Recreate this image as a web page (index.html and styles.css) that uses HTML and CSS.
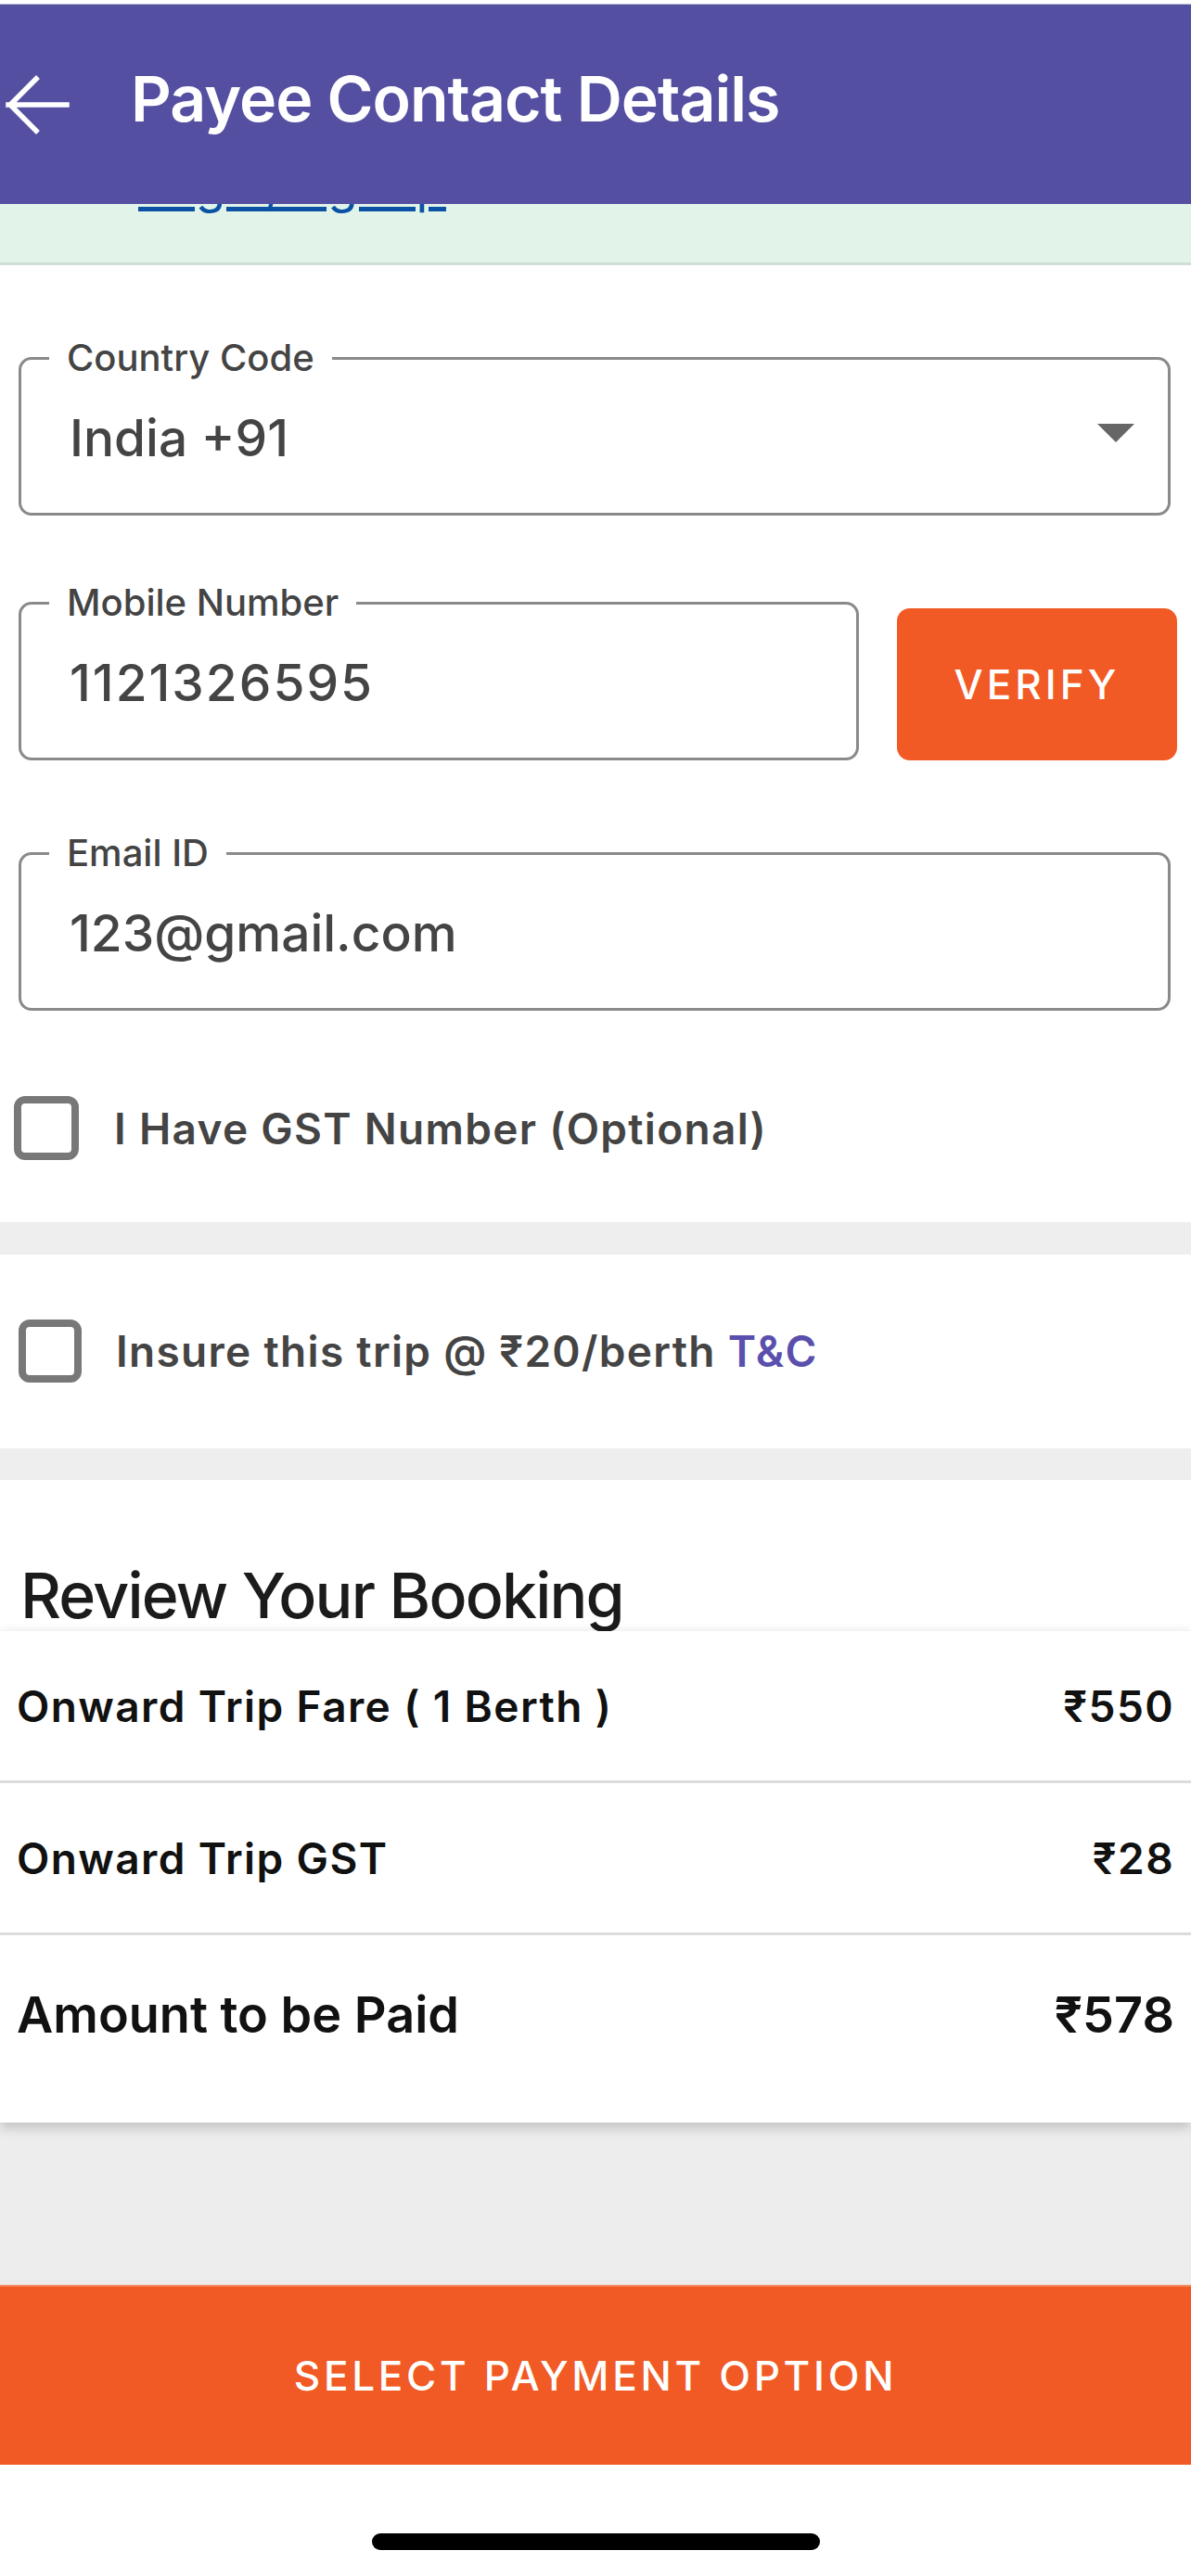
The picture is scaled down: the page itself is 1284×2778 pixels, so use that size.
FILE: index.html
```html
<!DOCTYPE html>
<html lang="en">
<head>
<meta charset="utf-8">
<title>Payee Contact Details</title>
<link rel="stylesheet" href="styles.css">
</head>
<body>
<div class="screen">
  <header class="appbar">
    <svg class="back" width="70" height="64" viewBox="0 0 70 64" aria-hidden="true">
      <path d="M3 32 H66 M33 4 L5 32 L33 60" fill="none" stroke="#ffffff" stroke-width="5.5" stroke-linecap="square" stroke-linejoin="miter"/>
    </svg>
    <h1 class="appbar-title">Payee Contact Details</h1>
  </header>

  <div class="notice">
    <a class="notice-link" href="#">Login/Signup</a>
  </div>

  <section class="form">
    <fieldset class="field field-wide">
      <legend>Country Code</legend>
      <div class="field-value">
        <span>India +91</span>
        <span class="caret"></span>
      </div>
    </fieldset>

    <div class="mobile-row">
      <fieldset class="field field-mobile">
        <legend>Mobile Number</legend>
        <div class="field-value"><span class="digits">1121326595</span></div>
      </fieldset>
      <button class="verify" type="button">VERIFY</button>
    </div>

    <fieldset class="field field-wide field-email">
      <legend>Email ID</legend>
      <div class="field-value"><span>123@gmail.com</span></div>
    </fieldset>

    <div class="check-row check-gst">
      <span class="checkbox"></span>
      <span class="check-label">I Have GST Number (Optional)</span>
    </div>
  </section>

  <div class="divider"></div>

  <section class="insure">
    <div class="check-row check-insure">
      <span class="checkbox"></span>
      <span class="check-label">Insure this trip @ ₹20/berth <a class="tnc" href="#">T&amp;C</a></span>
    </div>
  </section>

  <div class="divider divider-b"></div>

  <section class="review-head">
    <h2>Review Your Booking</h2>
  </section>

  <div class="fare-card">
    <div class="fare-row">
      <span>Onward Trip Fare ( 1 Berth )</span>
      <span>₹550</span>
    </div>
    <div class="fare-row">
      <span>Onward Trip GST</span>
      <span>₹28</span>
    </div>
    <div class="fare-row fare-total">
      <span>Amount to be Paid</span>
      <span>₹578</span>
    </div>
  </div>

  <div class="gray-space"></div>

  <button class="pay" type="button">SELECT PAYMENT OPTION</button>

  <div class="home-area">
    <span class="home-indicator"></span>
  </div>
</div>
</body>
</html>
```

FILE: styles.css
```css
* {
  box-sizing: border-box;
}

html, body {
  margin: 0;
  padding: 0;
  background: #ffffff;
}

body {
  font-family: "Inter", "Noto Sans", "DejaVu Sans", sans-serif;
  color: #444444;
}

.screen {
  width: 1284px;
  height: 2778px;
  display: flex;
  flex-direction: column;
  padding-top: 4px;
  overflow: hidden;
}

/* App bar */
.appbar {
  height: 216px;
  flex: 0 0 auto;
  background: #554fa1;
  border-top: 1px solid #b9b6d3;
  display: flex;
  align-items: center;
  padding-left: 6px;
}

.back {
  flex: 0 0 auto;
  display: block;
}

.appbar-title {
  margin: 0 0 14px 65px;
  font-size: 68px;
  font-weight: 600;
  color: #ffffff;
  letter-spacing: -1px;
  line-height: 1;
}

/* Notice strip (scrolled under the app bar) */
.notice {
  height: 66px;
  flex: 0 0 auto;
  background: #e2f4e9;
  border-bottom: 3px solid #cfdfd5;
  overflow: hidden;
  padding-left: 149px;
}

.notice-link {
  display: block;
  margin-top: -51px;
  font-size: 53px;
  line-height: 62px;
  color: #0b52a5;
  text-decoration: underline;
  text-decoration-thickness: 5px;
  text-underline-offset: 4px;
}

/* Form */
.form {
  flex: 0 0 auto;
  padding: 76px 0 67px 0;
  display: flex;
  flex-direction: column;
}

.field {
  margin: 0;
  border: 3px solid #8a8a8a;
  border-radius: 14px;
  padding: 0 36px 0 30px;
  min-width: 0;
}

.field-wide {
  margin: 0 22px 0 20px;
}

.field legend {
  padding: 0 19px;
  font-size: 40px;
  line-height: 48px;
  font-weight: 500;
  color: #444444;
}

.field-value {
  height: 143px;
  padding: 0 0 19px 22px;
  display: flex;
  align-items: center;
  justify-content: space-between;
  font-size: 55px;
  font-weight: 500;
  color: #444444;
  line-height: 1;
}

.digits {
  letter-spacing: 2px;
}

.caret {
  width: 0;
  height: 0;
  border-left: 20.5px solid transparent;
  border-right: 20.5px solid transparent;
  border-top: 20px solid #666666;
  margin-bottom: 10px;
}

.mobile-row {
  margin: 70px 15px 0 20px;
  display: flex;
  align-items: flex-end;
  gap: 41px;
}

.field-mobile {
  flex: 1 1 auto;
}

.verify {
  flex: 0 0 302px;
  height: 164px;
  margin-bottom: 0;
  border: none;
  border-radius: 14px;
  background: #f15a24;
  color: #ffffff;
  font-family: inherit;
  font-size: 44px;
  font-weight: 500;
  letter-spacing: 4px;
  padding: 0;
}

.field-email {
  margin-top: 76px;
}

.check-row {
  display: flex;
  align-items: center;
}

.check-gst {
  margin-top: 92px;
  padding-left: 15px;
  gap: 38px;
}

.checkbox {
  flex: 0 0 auto;
  width: 70px;
  height: 69px;
  border: 8px solid #787878;
  border-radius: 12px;
  background: #ffffff;
}

.check-label {
  font-size: 46px;
  font-weight: 600;
  color: #444444;
  line-height: 1;
  letter-spacing: 1.3px;
}

.divider {
  flex: 0 0 auto;
  height: 35px;
  background: #eeeeee;
}

.divider-b {
  height: 34px;
}

.insure {
  flex: 0 0 auto;
  padding: 70px 0 71px 0;
}

.check-insure {
  padding-left: 20px;
  gap: 37px;
}

.check-insure .checkbox {
  width: 68px;
  height: 68px;
}

.tnc {
  color: #5a4fad;
  text-decoration: none;
  font-weight: 600;
}

/* Review */
.review-head {
  flex: 0 0 auto;
  height: 163px;
  padding: 90px 0 0 22px;
}

.review-head h2 {
  margin: 0;
  font-size: 68px;
  line-height: 69px;
  font-weight: 500;
  color: #1b1b1b;
  letter-spacing: -1.8px;
}

.fare-card {
  flex: 0 0 auto;
  background: #ffffff;
  box-shadow: 0 -4px 8px rgba(0, 0, 0, 0.03), 0 6px 12px rgba(0, 0, 0, 0.18);
  position: relative;
  z-index: 1;
}

.fare-row {
  height: 164px;
  padding: 0 18px;
  display: flex;
  align-items: center;
  justify-content: space-between;
  border-bottom: 3px solid #dcdcdc;
  font-size: 46px;
  font-weight: 600;
  color: #111111;
  line-height: 1;
  letter-spacing: 1.4px;
}

.fare-total {
  height: 202px;
  border-bottom: none;
  padding-bottom: 30px;
  font-size: 54px;
  letter-spacing: 0;
}

.gray-space {
  flex: 1 1 auto;
  background: #ededed;
}

.pay {
  flex: 0 0 194px;
  border: none;
  border-top: 2px solid #f58a63;
  background: #f15a24;
  color: #ffffff;
  font-family: inherit;
  font-size: 44px;
  font-weight: 500;
  letter-spacing: 3.7px;
  padding: 0;
}

.home-area {
  flex: 0 0 120px;
  background: #ffffff;
  display: flex;
  justify-content: center;
  padding-top: 74px;
}

.home-indicator {
  width: 483px;
  height: 18px;
  border-radius: 9px;
  background: #000000;
}
```
